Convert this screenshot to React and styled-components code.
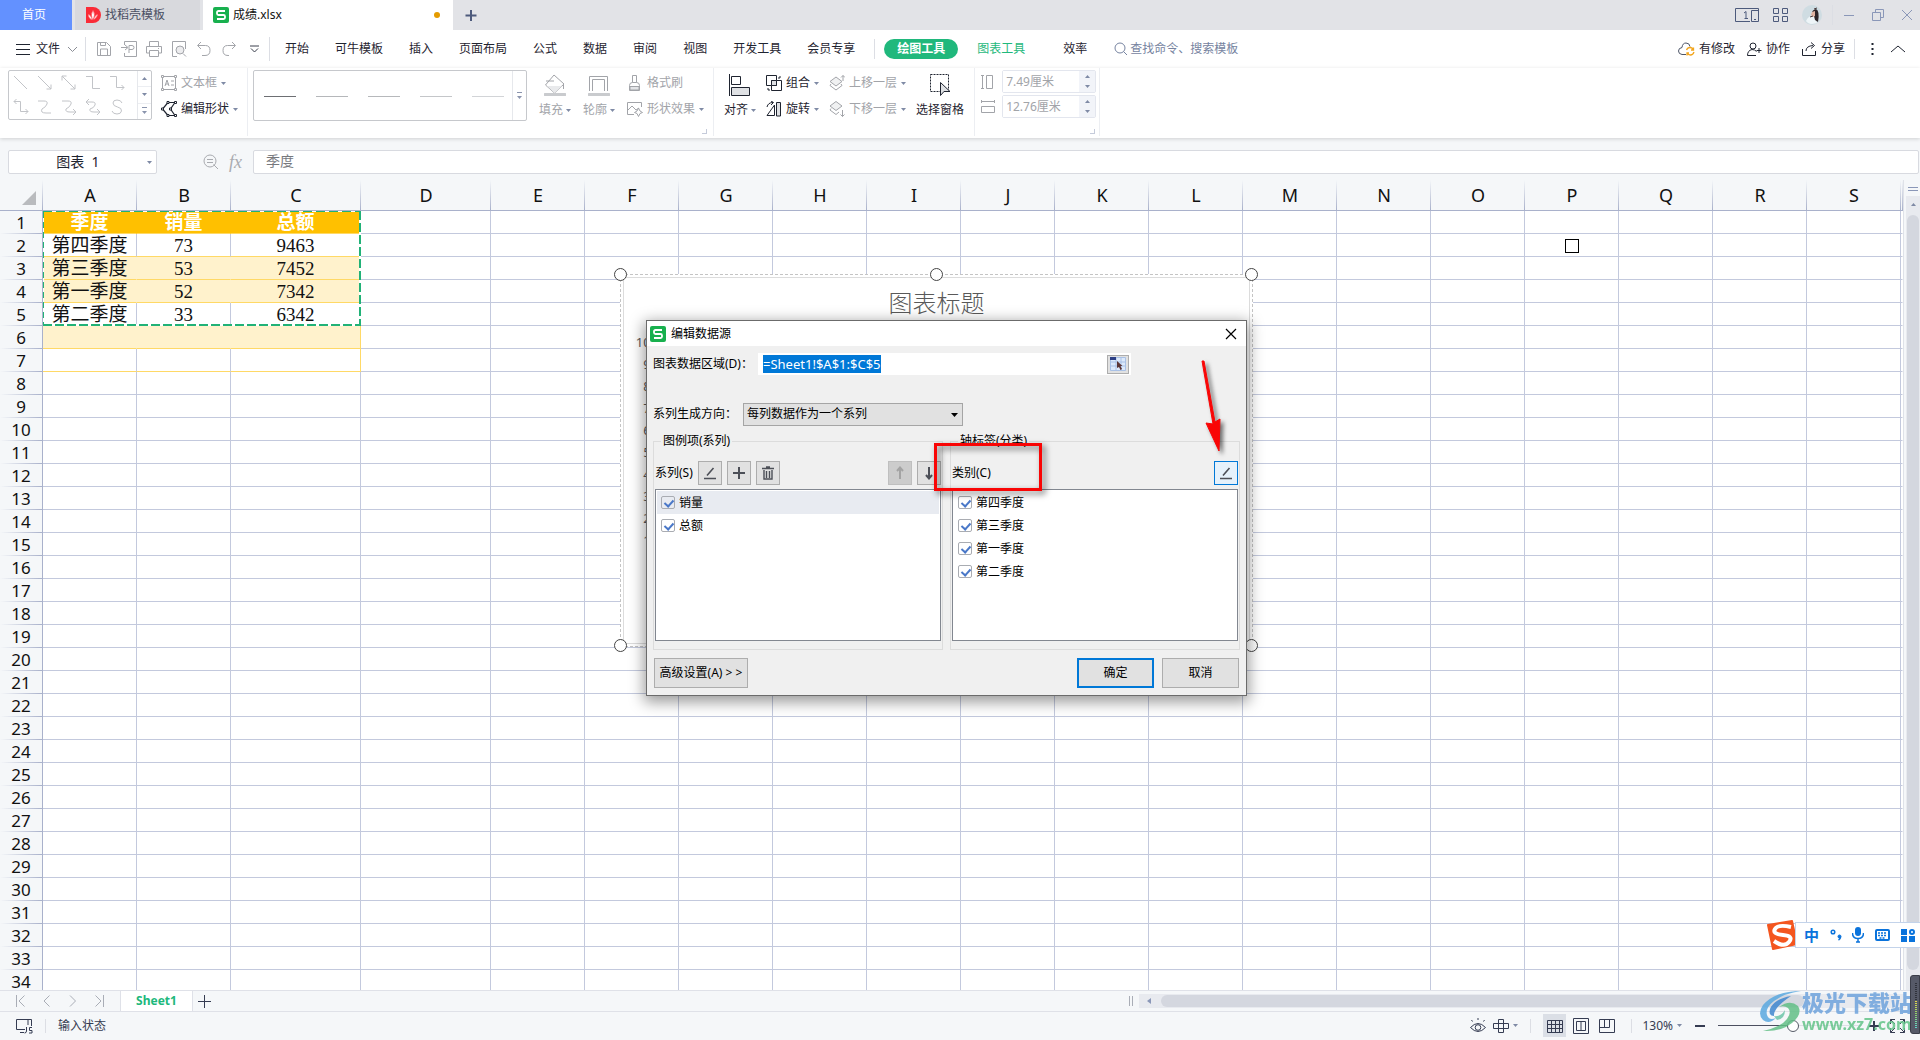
import React, { useEffect, useRef } from 'react';
import styled, { createGlobalStyle, css } from 'styled-components';

const GlobalStyle = createGlobalStyle`
	* { box-sizing: border-box; }
	body {
		margin: 0;
		overflow: hidden;
		background: #f5f7f9;
		color: #1f2430;
		font: 12px/18px 'Noto Sans', 'Noto Sans CJK SC', sans-serif;
	}
	button, input, select { font: inherit; color: inherit; margin: 0; }
	button { padding: 0; border: 0; background: none; white-space: nowrap; }
	svg { display: block; flex: none; }
`;

const Page = styled.div`
	display: flex;
	flex-direction: column;
	height: 100vh;
`;
const Svg = styled.svg`
	fill: none;
	stroke: currentColor;
`;
const Spacer = styled.div`flex: 1;`;
const Divider = styled.div`
	width: 1px;
	height: ${p => p.$h || 24}px;
	margin: 0 ${p => p.$gap || 9}px;
	background: #dcdee4;
	flex: none;
`;

/* ---------- title bar ---------- */
const TitleBar = styled.header`
	display: flex;
	align-items: center;
	height: 30px;
	gap: 3px;
	padding-right: 7px;
	background: #e2e3e7;
	color: #4d5a7c;
`;
const HomeTab = styled.button`
	width: 72px;
	height: 30px;
	padding-right: 4px;
	background: #6391ff;
	color: #fff;
`;
const FileTab = styled.button`
	display: flex;
	align-items: center;
	gap: 4px;
	width: ${p => (p.$active ? 250 : 125)}px;
	height: 30px;
	padding: 0 13px 0 10px;
	background: ${p => (p.$active ? '#fff' : '#d8d9dd')};
	color: ${p => (p.$active ? '#111' : '#4a4f63')};
`;
const Dot = styled.i`
	width: 6px;
	height: 6px;
	border-radius: 3px;
	margin-left: auto;
	background: #e49b00;
`;
const PlainButton = styled.button`
	display: flex;
	align-items: center;
	justify-content: center;
	gap: ${p => p.$gap || 4}px;
	color: ${p => p.$color || 'inherit'};
`;
const AccountTools = styled.div`
	display: flex;
	align-items: center;
	gap: 14px;
`;
const WindowButtons = styled.div`
	display: flex;
	align-items: center;
	gap: 17px;
	color: #8a97b8;
`;

/* ---------- menu ---------- */
const MenuBar = styled.nav`
	display: flex;
	align-items: center;
	height: 38px;
	padding: 0 14px 0 16px;
	background: #fff;
`;
const QuickAccess = styled.div`
	display: flex;
	align-items: center;
	gap: 9px;
	padding-left: 9px;
	color: #a3a5aa;
`;
const MenuTabs = styled.div`
	display: flex;
	align-items: center;
	gap: 26px;
	margin: 0 10px 0 9px;
`;
const ToolTabs = styled.div`
	display: flex;
	align-items: center;
	gap: 19px;
`;
const MenuTab = styled.button`
	color: ${p => (p.$green ? '#1fb97c' : '#1f2430')};
	${p => p.$pill && css`
		width: 74px;
		height: 20px;
		border-radius: 10px;
		background: #20b87c;
		color: #fff;
		font-weight: 700;
	`}
`;
const SearchLabel = styled.label`
	display: flex;
	align-items: center;
	gap: 2px;
	margin-left: 27px;
	color: #7683a0;
	input {
		width: 120px;
		padding: 0;
		border: 0;
		outline: 0;
		background: none;
	}
	input::placeholder { color: #7683a0; opacity: 1; }
`;
const MenuRight = styled.div`
	display: flex;
	align-items: center;
	gap: 12px;
`;

/* ---------- ribbon ---------- */
const Ribbon = styled.section`
	display: flex;
	height: 70px;
	background: #fff;
	box-shadow: 0 1px 4px rgba(0, 0, 0, .16);
	position: relative;
`;
const Group = styled.div`
	display: flex;
	align-items: flex-start;
	gap: ${p => p.$gap || 9}px;
	padding: 2px ${p => p.$right || 9}px 0 ${p => p.$left || 8}px;
	border-right: 1px solid #eceef2;
	height: 68px;
`;
const Corner = styled.i`
	align-self: flex-end;
	width: 5px;
	height: 5px;
	margin: 0 0 2px -14px;
	border: solid #c5cbda;
	border-width: 0 1px 1px 0;
`;
const Gallery = styled.div`
	display: flex;
	height: ${p => p.$h}px;
	border: 1px solid #c6c8cc;
	border-radius: 2px;
	color: #c2c4c8;
`;
const ShapeGrid = styled.div`
	display: grid;
	grid-template-columns: repeat(5, 24px);
	grid-template-rows: repeat(2, 24px);
	place-items: center;
	width: 128px;
`;
const GallerySteps = styled.div`
	display: flex;
	flex-direction: column;
	width: 14px;
	border-left: 1px solid #e6e8ec;
	color: #8a94ad;
	button {
		flex: 1;
		display: grid;
		place-items: center;
	}
	button + button { border-top: 1px solid #eceef2; }
`;
const StrokeList = styled.div`
	display: flex;
	align-items: center;
	gap: 20px;
	width: 258px;
	padding: 2px 0 0 10px;
`;
const StrokeSample = styled.i`
	width: 32px;
	height: 1px;
	background: ${p => p.$color};
`;
const SmallTool = styled.button`
	display: flex;
	align-items: center;
	gap: 4px;
	height: 26px;
	color: ${p => (p.$off ? '#a2a4a9' : '#1f2430')};
`;
const BigTool = styled.button`
	display: flex;
	flex-direction: column;
	align-items: center;
	gap: 4px;
	padding-top: 4px;
	line-height: 20px;
	color: ${p => (p.$off ? '#a2a4a9' : '#1f2430')};
	span { display: flex; align-items: center; gap: 3px; }
`;
const SizeRow = styled.label`
	display: flex;
	align-items: center;
	gap: 7px;
	margin-bottom: 2px;
	color: #a2a4a9;
`;
const SpinBox = styled.span`
	display: flex;
	width: 94px;
	height: 23px;
	border: 1px solid #e3e6ee;
	border-radius: 2px;
	input {
		width: 76px;
		padding: 0 3px;
		border: 0;
		outline: 0;
	}
`;
const SpinArrows = styled.span`
	display: grid;
	place-items: center;
	width: 16px;
	background: #f2f4f9;
`;

/* ---------- formula bar ---------- */
const FormulaBar = styled.div`
	display: flex;
	align-items: center;
	height: 42px;
	padding: 6px 1px 0 8px;
	font-size: 14px;
	color: #a9abb0;
`;
const NameBox = styled.label`
	display: flex;
	align-items: center;
	width: 149px;
	height: 24px;
	margin-right: 46px;
	padding-right: 4px;
	border: 1px solid #d8dae0;
	border-radius: 2px;
	background: #fff;
	input {
		flex: 1;
		min-width: 0;
		border: 0;
		outline: 0;
		text-align: center;
		color: #1f2430;
	}
`;
const Fx = styled.span`
	width: 15px;
	margin: 0 9px 0 10px;
	font: italic 18px/22px 'Liberation Serif', serif;
`;
const FormulaInput = styled.input`
	&& { color: #77797e; }
	flex: 1;
	min-width: 0;
	height: 24px;
	padding: 0 12px 4px;
	border: 1px solid #d8dae0;
	border-radius: 2px;
	background: #fff;
	outline: 0;
`;

/* ---------- sheet ---------- */
const Workspace = styled.main`
	position: relative;
	display: flex;
	flex: 1;
	min-height: 0;
`;
const SheetView = styled.div`
	flex: 1;
	min-width: 0;
	overflow: hidden;
`;
const Sheet = styled.table`
	table-layout: fixed;
	width: 100%;
	border-spacing: 0;
	background: #fff;
	th { padding: 0; height: 23px; line-height: 22px; }
`;
const ColHead = styled.th`
	&& { height: 31px; }
	border-bottom: 1px solid #a9b1cb;
	background: linear-gradient(#f5f7f9, #a9b1cb) right / 1px 100% no-repeat #f5f7f9;
	font-size: 18px;
	font-weight: 400;
	color: #111;
	svg { margin: 5px 0 0 22px; }
`;
const RowHead = styled.th`
	border-right: 1px solid #a9b1cb;
	background: linear-gradient(90deg, #f5f7f9, #a9b1cb) bottom / 100% 1px no-repeat #f5f7f9;
	font-size: 17px;
	font-weight: 400;
	color: #111;
`;
const Cell = styled.td`
	height: 23px;
	padding: 2px 0 0;
	border-right: 1px solid ${p => p.$right || '#c3c9dd'};
	border-bottom: 1px solid ${p => p.$bottom || '#c3c9dd'};
	background: ${p => p.$fill || '#fff'};
	font: ${p => (p.$title ? 700 : 400)} 19px/20px 'Liberation Serif', 'Noto Sans CJK SC', serif;
	text-align: center;
	white-space: nowrap;
	color: ${p => (p.$title ? '#fff' : '#111')};
`;
const Ants = styled(Svg)`
	position: absolute;
	left: 43px;
	top: 31px;
`;
const CellCursor = styled.i`
	position: absolute;
	left: 1565px;
	top: 59px;
	width: 14px;
	height: 14px;
	border: 1px solid #000;
`;
const VScroll = styled.div`
	display: flex;
	flex-direction: column;
	align-items: center;
	width: 17px;
	padding-left: 2px;
	border-left: 1px solid #dfe2e8;
	color: #8a97b8;
`;
const VTrack = styled.div`
	flex: 1;
	display: flex;
	flex-direction: column;
	align-items: center;
	gap: 9px;
	width: 14px;
	padding: 7px 0 20px;
	background: #e8eaef;
	i { flex: 1; width: 12px; border-radius: 6px; background: #d4d7df; }
`;

/* ---------- chart ---------- */
const ChartFrame = styled.div`
	position: absolute;
	left: 620px;
	top: 94px;
	width: 633px;
	height: 373px;
	padding: 2px;
	border: 1px dashed #c4c4c4;
	background: #fff;
`;
const ChartArea = styled.div`
	height: 100%;
	border: 1px solid #dcdcdc;
	padding-top: 7px;
	color: #595959;
`;
const ChartTitle = styled.h2`
	margin: 0 0 12px;
	font: 300 24px/34px 'Noto Sans CJK SC', sans-serif;
	text-align: center;
`;
const AxisLabels = styled.div`
	display: flex;
	flex-direction: column;
	width: 49px;
	font-size: 13px;
	line-height: 22px;
	text-align: right;
`;
const Handle = styled.i`
	position: absolute;
	left: ${p => p.$x};
	top: ${p => p.$y};
	width: 13px;
	height: 13px;
	margin: -7px;
	border: 1px solid #444;
	border-radius: 50%;
	background: #fff;
`;

/* ---------- dialog ---------- */
const Dialog = styled.section`
	position: absolute;
	left: 646px;
	top: 140px;
	width: 601px;
	border: 1px solid #6b6b6b;
	background: #f0f0f0;
	color: #000;
	box-shadow: 0 4px 14px 2px rgba(0, 0, 0, .4);
`;
const DialogTitle = styled.div`
	display: flex;
	align-items: center;
	gap: 5px;
	height: 25px;
	padding: 0 9px 0 3px;
	background: #fff;
	button { margin-left: auto; }
`;
const DialogBody = styled.div`padding: 7px 6px;`;
const Field = styled.div`
	display: flex;
	align-items: center;
	height: 22px;
	margin-bottom: ${p => p.$after}px;
	label { width: ${p => p.$label}px; white-space: nowrap; }
`;
const RangeBox = styled.div`
	display: flex;
	align-items: center;
	width: 373px;
	height: 22px;
	padding: 0 2px 0 5px;
	background: #fff;
	input {
		flex: 1;
		min-width: 0;
		padding: 0;
		border: 0;
		outline: 0;
		font-size: 13px;
	}
	input::selection { background: #0078d7; color: #fff; }
`;
const PickButton = styled.button`
	display: grid;
	place-items: center;
	width: 22px;
	height: 19px;
	border: 1px solid #adadad;
	background: #e1e1e1;
`;
const SelectWrap = styled.div`
	position: relative;
	svg { position: absolute; right: 5px; top: 10px; pointer-events: none; }
	select {
		appearance: none;
		width: 220px;
		height: 23px;
		padding: 0 3px;
		border: 1px solid #a5a5a5;
		border-radius: 0;
		background: #e1e1e1;
	}
`;
const Panels = styled.div`
	display: grid;
	grid-template-columns: 1fr 1fr;
	gap: 7px;
`;
const Panel = styled.fieldset`
	min-width: 0;
	margin: 0;
	padding: 11px 1px 8px;
	border: 1px solid #dcdcdc;
	legend { margin-left: 6px; padding: 0 2px; line-height: 18px; }
`;
const PanelBar = styled.div`
	display: flex;
	align-items: center;
	gap: 5px;
	height: 24px;
	margin-bottom: 4px;
	button:first-of-type { margin-left: ${p => (p.$push ? 'auto' : 0)}; }
`;
const SquareButton = styled.button`
	display: grid;
	place-items: center;
	width: 24px;
	height: 24px;
	border: 1px solid ${p => (p.$hot ? '#0078d7' : p.$off ? '#bfbfbf' : '#adadad')};
	background: ${p => (p.$hot ? '#e5f1fb' : p.$off ? '#cccccc' : '#e1e1e1')};
	color: ${p => (p.$off ? '#a3a3a3' : '#4c4f57')};
`;
const CheckList = styled.ul`
	list-style: none;
	height: 152px;
	margin: 0;
	padding: 1px;
	border: 1px solid #828790;
	background: #fff;
`;
const CheckItem = styled.li`
	height: 23px;
	background: ${p => (p.$active ? '#e8ebf1' : 'transparent')};
	label {
		display: flex;
		align-items: center;
		gap: 4px;
		height: 23px;
		padding-left: 4px;
	}
	input {
		appearance: none;
		position: relative;
		width: 14px;
		height: 13px;
		border: 1px solid #a9acb2;
		border-radius: 2px;
	}
	input:checked::after {
		content: '';
		position: absolute;
		left: 4px;
		top: 1px;
		width: 4px;
		height: 7px;
		border: solid #4a78c8;
		border-width: 0 2px 2px 0;
		transform: rotate(42deg);
	}
`;
const DialogFooter = styled.div`
	display: flex;
	gap: 8px;
	margin: 8px 1px 0;
`;
const DialogButton = styled.button`
	width: ${p => p.$w || 77}px;
	height: 30px;
	border: ${p => (p.$primary ? '2px solid #0078d7' : '1px solid #adadad')};
	background: #e1e1e1;
`;
const RedFrame = styled.i`
	position: absolute;
	left: 287px;
	top: 122px;
	width: 108px;
	height: 48px;
	border: 3px solid #f90505;
	filter: drop-shadow(3px 3px 3px rgba(0, 0, 0, .6));
`;
const RedArrow = styled.svg`
	position: absolute;
	left: 547px;
	top: 34px;
	filter: drop-shadow(3px 3px 2px rgba(0, 0, 0, .55));
`;

/* ---------- bottom bars ---------- */
const TabStrip = styled.div`
	display: flex;
	align-items: center;
	height: 22px;
	padding: 0 14px 0 16px;
	border: solid #dfe1e8;
	border-width: 1px 0;
	color: #a9adb6;
`;
const TabNav = styled.div`
	display: flex;
	gap: 18px;
	width: 104px;
`;
const SheetTab = styled.button`
	width: 73px;
	height: 21px;
	border: solid #dfe1e8;
	border-width: 0 1px 1px;
	background: #fff;
	font-weight: 700;
	color: #20b87c;
`;
const HScroll = styled.div`
	display: flex;
	align-items: center;
	gap: 10px;
	width: 767px;
	height: 14px;
	margin-left: 6px;
	padding: 0 102px 0 8px;
	background: #e8eaef;
	color: #8a97b8;
	i { flex: 1; height: 12px; border-radius: 6px; background: #d4d7df; }
`;
const StatusBar = styled.footer`
	display: flex;
	align-items: center;
	height: 28px;
	padding: 0 15px 1px 16px;
	color: #353c52;
`;
const ViewButton = styled.button`
	display: grid;
	place-items: center;
	width: 23px;
	height: 23px;
	margin-right: 3px;
	background: ${p => (p.$on ? '#dbdfe6' : 'none')};
`;
const Zoom = styled.input`
	&& { margin: 0 6px 0 12px; }
	appearance: none;
	width: 144px;
	height: 12px;
	background: linear-gradient(90deg, #4b4f60 52%, #dcdfe6 52%) center / 100% 1px no-repeat;
	&::-webkit-slider-thumb {
		appearance: none;
		width: 12px;
		height: 12px;
		border: 1px solid #555a66;
		border-radius: 50%;
		background: #fff;
	}
`;

/* ---------- floating things ---------- */
const ImeBar = styled.div`
	position: fixed;
	right: 0;
	bottom: 90px;
	display: flex;
	align-items: center;
	gap: 9px;
	width: 154px;
	height: 30px;
	color: #0a73dc;
	font-size: 15px;
	font-weight: 700;
`;
const ImeTools = styled.div`
	display: flex;
	align-items: center;
	justify-content: space-between;
	flex: 1;
	height: 26px;
	margin-left: -12px;
	padding: 0 5px 0 8px;
	border: 1px solid #c3d3ea;
	border-right: 0;
	background: #fff;
`;
const Meter = styled.div`
	position: fixed;
	right: 0;
	bottom: 6px;
	width: 10px;
	height: 59px;
	padding: 7px 2px 5px 4px;
	border-radius: 3px 0 0 3px;
	border: 1px solid #3b3e49;
	background: #565a68;
	i {
		display: block;
		height: 100%;
		background:
			repeating-linear-gradient(transparent 0 1px, #565a68 1px 2px),
			linear-gradient(#2f323b 40%, #e5d84a 40%, #8ed36a 70%, #5fd8cf);
	}
`;
const Watermark = styled.div`
	position: fixed;
	right: 8px;
	bottom: 6px;
	display: flex;
	opacity: .85;
	font-weight: 700;
	pointer-events: none;
	b { display: block; font-size: 22px; line-height: 24px; color: #6ea3dc; }
	span { display: block; font-size: 16px; line-height: 20px; color: #63c389; }
`;

const Caret = ({ up }) => (
	<Svg width="5" height="3" viewBox="0 0 5 3">
		<path d={up ? 'M0 3h5L2.5 0z' : 'M0 0h5L2.5 3z'} fill="#7f8aa5" stroke="none" />
	</Svg>
);

const DoubleCaret = () => (
	<Svg width="7" height="8"><path d="M1 .5h5" /><path d="M1 4h5L3.5 7z" fill="currentColor" stroke="none" /></Svg>
);

const Icon = ({ d, w = 16, h = 16, sw = 1, children }) => (
	<Svg width={w} height={h} viewBox={`0 0 ${w} ${h}`} strokeWidth={sw}>
		<path d={d} />
		{children}
	</Svg>
);

const Logo = () => (
	<Svg width="16" height="16">
		<rect width="16" height="16" rx="2" fill="#18b04e" stroke="none" />
		<path d="M12 4H5.5Q4 4 4 5.5v1Q4 8 5.5 8h5Q12 8 12 9.5v1q0 1.5-1.5 1.5H4" stroke="#fff" strokeWidth="1.8" />
	</Svg>
);

const EditPen = () => <Icon w={14} h={14} d="M1 12.5h12M4 9.5L10.5 2" sw={1.6} />;

const quickIcons = [
	'M1.5 1.5h9l4 4v9h-13zM4.5 14V8h7v6M4.5 1.5v3h5v-3',
	'M3.5 4V.5h12v15h-12V12M0 6.5h6M4 4l3 2.5L4 9M8 12V4.5h3q2 0 2 2t-2 2H8',
	'M3.5 5V.5h9V5M3.5 12h-3V5.5h15V12h-3M3.5 9.5h9v6h-9zM12 7.5h1',
	'M6 15.5H1.5V.5h13V8M12 12.5l3 3',
	'M5 1L1.5 4.5 5 8M2 4.5h7.5q4.5 0 4.5 5t-5 5H6',
	'M11 1l3.5 3.5L11 8M14 4.5H6.5Q2 4.5 2 9.5t5 5h1',
];

const shapeIcons = [
	'M1 1l13 13',
	'M1 1l13 13M14 9.5V14H9.5',
	'M1 1l13 13M14 9.5V14H9.5M1 5.5V1h4.5',
	'M1 1.5h6.5v12H15',
	'M1 1.5h6.5v11H15M12.5 10l2.5 2.5-2.5 2.5',
	'M1 2.5h6.5v10H15M12.5 10l2.5 2.5-2.5 2.5M3.5 0L1 2.5 3.5 5',
	'M1 2h6q4 0 3 3t-5 5q-2 4 4 4h5',
	'M1 2h6q4 0 3 3t-5 5q-1 3 4 3h6M12 10l3 3-3 3',
	'M1 3h6q4 0 3 3t-5 4q-1 3 4 3h6M12 10l3 3-3 3M4 0L1 3l3 3',
	'M13 4Q12 1 8 1 4 1 4 4t4.5 4 4 4Q12 15 8 15 4 15 3 12',
];

const strokeColors = ['#6d6f73', '#b5b7ba', '#b6b8bb', '#c4c6c9', '#d2d4d7'];
const menuTabs = ['开始', '可牛模板', '插入', '页面布局', '公式', '数据', '审阅', '视图', '开发工具', '会员专享'];
const columns = 'ABCDEFGHIJKLMNOPQRS'.split('');
const wideColumns = { C: 130, D: 130 };
const rowCount = 34;
const cells = [
	['季度', '销量', '总额'],
	['第四季度', '73', '9463'],
	['第三季度', '53', '7452'],
	['第一季度', '52', '7342'],
	['第二季度', '33', '6342'],
];
const quarters = ['第四季度', '第三季度', '第一季度', '第二季度'];
const axisValues = [10000, 9000, 8000, 7000, 6000, 5000, 4000, 3000, 2000, 1000];

function TopBar () {
	return (
		<TitleBar>
			<HomeTab>首页</HomeTab>
			<FileTab>
				<Svg width="16" height="16">
					<path d="M1 0h7a8 8 0 0 1 0 16H1z" fill="#fa2c37" stroke="none" />
					<path d="M7.5 13Q5 8 8 3q3 5 0 10M7 13Q3 11 3 7q3 1 4.5 6M8 13q4-2 5-6-3 1-5 6" fill="#fff" stroke="#fa2c37" strokeWidth=".5" />
				</Svg>
				找稻壳模板
			</FileTab>
			<FileTab $active>
				<Logo />
				成绩.xlsx
				<Dot />
			</FileTab>
			<PlainButton aria-label="新建"><Icon w={30} h={14} d="M15 2v11M9.5 7.5h11" sw={2} /></PlainButton>
			<Spacer />
			<AccountTools>
				<Svg width="24" height="14">
					<path d="M15 13.5H.5V.5h23v13h-7v-11h7M19 11.5h2" />
					<path d="M9 5l2-1.5V11M9.5 10.5h3.5" />
				</Svg>
				<Icon w={15} h={14} d="M.5.5h5v5h-5zM9.5.5h5v5h-5zM.5 8.5h5v5h-5zM9.5 8.5h5v5h-5z" />
				<Svg width="20" height="20">
					<circle cx="10" cy="10" r="10" fill="#cfdce2" stroke="none" />
					<path d="M10 19q-4 0-6-3 2-5 8-6l3 8z" fill="#eef5f8" stroke="none" />
					<path d="M10 8q0-3 4-4 4 2 2 13l-3-2-1-4z" fill="#2c2428" stroke="none" />
					<path d="M10 7l3-1v5l-2 1-2-2z" fill="#e0b3a2" stroke="none" />
					<path d="M8 12l3-1M12 4l3-1" stroke="#4a3b3c" />
				</Svg>
			</AccountTools>
			<Divider $h={20} $gap={7} />
			<WindowButtons>
				<Icon w={12} h={12} d="M1 6.5h10" />
				<Icon w={12} h={12} d="M.5 3.5h8v8h-8zM3.5 3.5v-3h8v8h-3" />
				<Icon w={12} h={12} d="M1 1l10 10M11 1L1 11" />
			</WindowButtons>
		</TitleBar>
	);
}

function Menu () {
	return (
		<MenuBar>
			<PlainButton $gap={6}>
				<Icon w={14} h={12} d="M0 1.5h14M0 6.5h14M0 11.5h14" />
				文件
			</PlainButton>
			<PlainButton $color="#8a8d95"><Icon w={24} h={6} d="M8 1l4.5 4.5L17 1" /></PlainButton>
			<Divider $gap={1} />
			<QuickAccess>
				{quickIcons.map((d, i) => (
					<PlainButton key={d}>
						<Icon d={d}>{i === 3 && <circle cx="9" cy="9" r="4" fill="#ececee" />}</Icon>
					</PlainButton>
				))}
				<PlainButton $color="#3a3f4c"><Icon w={17} h={8} d="M4 1h9M5 3.5L8.5 7 12 3.5" /></PlainButton>
			</QuickAccess>
			<Divider $gap={6} />
			<MenuTabs>
				{menuTabs.map(name => <MenuTab key={name}>{name}</MenuTab>)}
			</MenuTabs>
			<Divider $h={20} $gap={9} />
			<ToolTabs>
				<MenuTab $pill>绘图工具</MenuTab>
				<MenuTab $green>图表工具</MenuTab>
				<Spacer />
				<MenuTab>效率</MenuTab>
			</ToolTabs>
			<SearchLabel>
				<Icon w={14} h={14} d="M9.5 9.5L13 13"><circle cx="6" cy="6" r="5" /></Icon>
				<input placeholder="查找命令、搜索模板" />
			</SearchLabel>
			<Spacer />
			<MenuRight>
				<PlainButton>
					<Svg width="17" height="14">
						<path d="M8 12.5H4Q.5 12 .5 9T4 5.5Q4.5 1 8 1t4 3.5" stroke="#4d5568" />
						<path d="M8.5 8q1-2.5 3.5-2.5T15.5 8M15.5 5.5V8H13M16 10q-1 3-3.5 3T9 11M9 13.5V11h2" stroke="#f2a51d" strokeWidth="1.3" />
					</Svg>
					有修改
				</PlainButton>
				<PlainButton>
					<Icon w={15} h={14} d="M9 13.5H.5q0-5 4.5-6 3 0 4.5 2M12 6v5M9.5 8.5h5"><circle cx="6" cy="4" r="3" /></Icon>
					协作
				</PlainButton>
				<PlainButton>
					<Icon w={15} h={14} d="M.5 7v6.5h13V9M4 9q0-5 7-5.5M9 .5l3.5 3L9 6.5" />
					分享
				</PlainButton>
			</MenuRight>
			<Divider $h={20} $gap={9} />
			<Icon w={18} h={14} d="M8.5 1v2M8.5 6v2M8.5 11v2" sw={2} />
			<Icon w={24} h={8} d="M9 7l7-6 7 6" />
		</MenuBar>
	);
}

function Tools () {
	return (
		<Ribbon>
			<Group>
				<Gallery $h={50}>
					<ShapeGrid>{shapeIcons.map(d => <Icon key={d} d={d} />)}</ShapeGrid>
					<GallerySteps>
						<button aria-label="上"><Caret up /></button>
						<button aria-label="下"><Caret /></button>
						<button aria-label="更多"><DoubleCaret /></button>
					</GallerySteps>
				</Gallery>
				<div>
					<SmallTool $off>
						<Icon d="M2.5 1.5h11M2.5 14.5h11M1.5 2.5v11M14.5 2.5v11M4 11l2-6 2 6M5 9h2.5M10 6h3M10 10h3">
							<path d="M.5.5h2v2h-2zM13.5.5h2v2h-2zM.5 13.5h2v2h-2zM13.5 13.5h2v2h-2z" fill="#fff" />
						</Icon>
						文本框 <Caret />
					</SmallTool>
					<SmallTool>
						<Icon d="M7 1.5L1.5 8 7 14.5M14 1.5L9.5 8l4.5 6.5M7 1.5h7M7 14.5h7" sw={1.2}>
							<path d="M6 .5h2v2H6zM13.5.5h2v2h-2zM6 13.5h2v2H6zM13.5 13.5h2v2h-2zM.5 7h2v2h-2zM8.5 7h2v2h-2z" fill="#fff" strokeWidth="1" />
						</Icon>
						编辑形状 <Caret />
					</SmallTool>
				</div>
			</Group>
			<Group $left={5} $right={6} $gap={12}>
				<Gallery $h={51}>
					<StrokeList>{strokeColors.map(c => <StrokeSample key={c} $color={c} />)}</StrokeList>
					<GallerySteps><button aria-label="更多"><DoubleCaret /></button></GallerySteps>
				</Gallery>
				<BigTool $off>
					<Icon w={22} h={22} d="M10 1L1.5 11l9 8 9.5-9zM2 7h8M19.5 10v5">
						<path d="M3 12h15l-7.5 7z" fill="#e9eaec" stroke="none" />
						<path d="M1 20.5h20" stroke="#c9cbce" strokeWidth="3" strokeLinecap="round" />
					</Icon>
					<span>填充 <Caret /></span>
				</BigTool>
				<BigTool $off>
					<Icon w={22} h={22} d="M1.5 17V2.5h18V17M4.5 17V5.5h12V17">
						<path d="M1 20.5h20" stroke="#c9cbce" strokeWidth="3" strokeLinecap="round" />
					</Icon>
					<span>轮廓 <Caret /></span>
				</BigTool>
				<div>
					<SmallTool $off>
						<Icon d="M5.5 7.5v-7h4v7M2.5 15.5v-5q0-3 3-3h4q3 0 3 3v5z"><path d="M3 11.5h9V15H3z" fill="#e4e5e8" /></Icon>
						格式刷
					</SmallTool>
					<SmallTool $off>
						<Icon d="M7 13.5H.5v-12h14V6M1 9l4-4 4 4 3-2M11.5 7l1.5 3 2.5 1.5-2.5 1-1.5 3-1.5-3-2.5-1L10 10z" />
						形状效果 <Caret />
					</SmallTool>
				</div>
				<Corner />
			</Group>
			<Group $left={10} $right={10} $gap={10}>
				<BigTool>
					<Icon w={24} h={22} d="M1.5 0v22M3.5 2.5h9v8h-9z"><path d="M3.5 13.5h18v8h-18z" fill="#dfe1e4" /></Icon>
					<span>对齐 <Caret /></span>
				</BigTool>
				<div>
					<SmallTool>
						<Icon d="M.5.5h10v10H.5zM5.5 5.5h10v10h-10zM14 1v2h-2M2 13v2h2"><path d="M5.5 5.5h5v5h-5z" fill="#dfe1e4" /></Icon>
						组合 <Caret />
					</SmallTool>
					<SmallTool>
						<Icon d="M8.5 4L1 14.5h7.5zM1 6q1-4.5 6-4.5M5 0l2.5 1.5L5 4"><path d="M10.5 1.5h4V15h-4z" fill="#dfe1e4" /></Icon>
						旋转 <Caret />
					</SmallTool>
				</div>
				<div>
					<SmallTool $off>
						<Icon d="M2 9l-1 1.5L7 15l6-4.5L12 9M14 6V.5M12 2.5l2-2 2 2"><path d="M7 2L1 6.5 7 11l6-4.5z" fill="#f0f1f2" /></Icon>
						上移一层 <Caret />
					</SmallTool>
					<SmallTool $off>
						<Icon d="M2 7.5L1 9l6 4.5L10 11M13.5 9v6.5M11.5 13.5l2 2 2-2"><path d="M7 .5L1 5l6 4.5L13 5z" fill="#f0f1f2" /></Icon>
						下移一层 <Caret />
					</SmallTool>
				</div>
				<BigTool>
					<Svg width="24" height="22">
						<path d="M2.5.5h18v17h-18z" strokeDasharray="2 1" />
						<path d="M12.5 8.5v13l3.5-4h6z" fill="#dfe1e4" />
					</Svg>
					<span>选择窗格</span>
				</BigTool>
			</Group>
			<Group $left={6} $right={4} $gap={8}>
				<div>
					<SizeRow>
						<Icon w={14} h={16} d="M0 1.5h3M0 14.5h3M1.5 2v12M5.5 1.5h6v13h-6z" />
						<SpinBox><input defaultValue="7.49厘米" /><SpinArrows><Caret up /><Caret /></SpinArrows></SpinBox>
					</SizeRow>
					<SizeRow>
						<Icon w={14} h={16} d="M.5 1v3M13.5 1v3M1 2.5h12M.5 7.5h13v6H.5z" />
						<SpinBox><input defaultValue="12.76厘米" /><SpinArrows><Caret up /><Caret /></SpinArrows></SpinBox>
					</SizeRow>
				</div>
				<Corner />
			</Group>
		</Ribbon>
	);
}

function Grid () {
	const rows = Array.from({ length: rowCount }, (_, r) => r);

	// table style: gold header, banded rows 3, 4 and 6, outline down to row 7
	const cellStyle = (r, c) => {
		if (c > 2 || r > 6) return {};
		const fill = r === 0 ? '#ffc000' : [2, 3, 5].includes(r) ? '#fff2cc' : '#fff';
		const right = c === 2 && r > 4 ? '#ffd966' : fill !== '#fff' ? fill : undefined;
		return { $fill: fill, $right: right, $bottom: '#ffd966', $title: r === 0 };
	};

	return (
		<Sheet>
			<colgroup>
				<col width="43" />
				{columns.map(c => <col key={c} width={wideColumns[c] || 94} />)}
				<col />
			</colgroup>
			<thead>
				<tr>
					<ColHead><Svg width="14" height="14"><path d="M14 0v14H0z" fill="#b9bbbe" stroke="none" /></Svg></ColHead>
					{columns.map(c => <ColHead key={c} scope="col">{c}</ColHead>)}
					<ColHead />
				</tr>
			</thead>
			<tbody>
				{rows.map(r => (
					<tr key={r}>
						<RowHead scope="row">{r + 1}</RowHead>
						{columns.map((name, c) => (
							<Cell key={name} {...cellStyle(r, c)}>{cells[r] && cells[r][c]}</Cell>
						))}
						<Cell $right="#fff" />
					</tr>
				))}
			</tbody>
		</Sheet>
	);
}

function Chart () {
	return (
		<ChartFrame>
			<ChartArea>
				<ChartTitle>图表标题</ChartTitle>
				<AxisLabels>{axisValues.map(v => <span key={v}>{v}</span>)}</AxisLabels>
			</ChartArea>
			<Handle $x="0" $y="0" />
			<Handle $x="50%" $y="0" />
			<Handle $x="100%" $y="0" />
			<Handle $x="0" $y="100%" />
			<Handle $x="100%" $y="100%" />
		</ChartFrame>
	);
}

function CheckRow ({ name, active }) {
	return (
		<CheckItem $active={active}>
			<label><input type="checkbox" defaultChecked />{name}</label>
		</CheckItem>
	);
}

function DataSourceDialog () {
	const rangeRef = useRef(null);

	useEffect(() => {
		rangeRef.current.focus();
		rangeRef.current.select();
	}, []);

	return (
		<Dialog role="dialog" aria-label="编辑数据源">
			<DialogTitle>
				<Logo />
				编辑数据源
				<button aria-label="关闭"><Icon w={12} h={12} d="M1 1l10 10M11 1L1 11" sw={1.2} /></button>
			</DialogTitle>
			<DialogBody>
				<Field $after={28} $label={105}>
					<label htmlFor="range">图表数据区域(D)：</label>
					<RangeBox>
						<input id="range" ref={rangeRef} defaultValue="=Sheet1!$A$1:$C$5" />
						<PickButton aria-label="选择区域">
							<Svg width="16" height="14">
								<path d="M.5.5h15v13H.5z" fill="#dce9fb" stroke="#a9c1e6" />
								<path d="M1 5h14M1 9h14M6 1v12M11 1v12" stroke="#a9c1e6" />
								<path d="M0 0h6v3H0z" fill="#2c3f86" stroke="none" />
								<path d="M7 4v7l2-1 1.5 3 1.5-1-1.5-3h2z" fill="#5a3434" stroke="none" />
							</Svg>
						</PickButton>
					</RangeBox>
				</Field>
				<Field $after={7} $label={90}>
					<label htmlFor="direction">系列生成方向：</label>
					<SelectWrap>
						<select id="direction" defaultValue="col">
							<option value="col">每列数据作为一个系列</option>
							<option value="row">每行数据作为一个系列</option>
						</select>
						<Svg width="7" height="4"><path d="M0 0h7L3.5 4z" fill="#000" stroke="none" /></Svg>
					</SelectWrap>
				</Field>
				<Panels>
					<Panel>
						<legend>图例项(系列)</legend>
						<PanelBar>
							系列(S)
							<SquareButton aria-label="编辑系列"><EditPen /></SquareButton>
							<SquareButton aria-label="添加"><Icon w={14} h={14} d="M7 1v12M1 7h12" sw={2} /></SquareButton>
							<SquareButton aria-label="删除"><Icon w={12} h={14} d="M0 2.5h12M4 1h4M2 4v9h8V4M4.5 5v7M7.5 5v7" sw={1.4} /></SquareButton>
							<Spacer />
							<SquareButton $off aria-label="上移"><Icon w={10} h={14} d="M5 13V2M2 5l3-3.5L8 5" sw={2} /></SquareButton>
							<SquareButton aria-label="下移"><Icon w={10} h={14} d="M5 1v11M2 9l3 3.5L8 9" sw={2} /></SquareButton>
						</PanelBar>
						<CheckList>
							<CheckRow name="销量" active />
							<CheckRow name="总额" />
						</CheckList>
					</Panel>
					<Panel>
						<legend>轴标签(分类)</legend>
						<PanelBar $push>
							类别(C)
							<SquareButton $hot aria-label="编辑类别"><EditPen /></SquareButton>
						</PanelBar>
						<CheckList>
							{quarters.map(q => <CheckRow key={q} name={q} />)}
						</CheckList>
					</Panel>
				</Panels>
				<DialogFooter>
					<DialogButton $w={94}>高级设置(A) &gt; &gt;</DialogButton>
					<Spacer />
					<DialogButton $primary>确定</DialogButton>
					<DialogButton>取消</DialogButton>
				</DialogFooter>
			</DialogBody>
			<RedFrame />
			<RedArrow width="36" height="100">
				<path d="M8 6L19 69l-7-1 13 28 1-32-5 3L10 6z" fill="#f90505" stroke="#f90505" strokeLinejoin="round" />
			</RedArrow>
		</Dialog>
	);
}

function Bottom () {
	return (
		<>
			<TabStrip>
				<TabNav>
					<Icon w={9} h={12} d="M.5 0v12M8.5.5L3 6l5.5 5.5" />
					<Icon w={8} h={12} d="M6.5.5L1 6l5.5 5.5" />
					<Icon w={8} h={12} d="M1 .5L6.5 6 1 11.5" />
					<Icon w={9} h={12} d="M8.5 0v12M.5.5L6 6 .5 11.5" />
				</TabNav>
				<SheetTab>Sheet1</SheetTab>
				<PlainButton aria-label="新建工作表" $color="#353c52"><Icon w={24} h={13} d="M11.5 0v13M5 6.5h13" /></PlainButton>
				<Spacer />
				<Icon w={4} h={10} d="M.5 0v10M3.5 0v10" />
				<HScroll>
					<Svg width="4" height="6"><path d="M4 0v6L0 3z" fill="currentColor" stroke="none" /></Svg>
					<i />
				</HScroll>
			</TabStrip>
			<StatusBar>
				<Icon w={17} h={16} d="M9 11.5H.5v-10H15M4 14.5h4M12 7V1.5h3.5V8M10.5 9v4q0 2-2 2M16 9.5h-2.5v3H16v2.5h-3" />
				<Divider $h={14} $gap={12} />
				<Spacer>输入状态</Spacer>
				<Icon w={23} d="M.5 9.5Q8 1.5 15.5 9.5 8 17.5.5 9.5M8 0v2M1.5 2l1 1.5M14.5 2l-1 1.5"><circle cx="8" cy="9.5" r="2.8" /></Icon>
				<PlainButton><Icon d="M5.5 1.5h5v13h-5zM.5 5.5h15v5H.5z" /><Caret /></PlainButton>
				<Divider $h={14} $gap={12} />
				<ViewButton $on aria-label="普通视图"><Icon d="M.5 2.5h15v12H.5zM.5 6.5h15M.5 10.5h15M4.5 2.5v12M8.5 2.5v12M12.5 2.5v12" /></ViewButton>
				<ViewButton aria-label="分页预览"><Icon d="M.5.5h15v15H.5zM3.5 3.5h9v9h-9zM8 3.5v9" /></ViewButton>
				<ViewButton aria-label="页面布局"><Icon d="M.5 1.5h15v13H.5zM5.5 1.5v8M10.5 1.5v8M.5 9.5h10" /></ViewButton>
				<Divider $h={14} $gap={10} />
				<PlainButton>130% <Caret /></PlainButton>
				<Icon w={24} h={12} d="M13 6h10" sw={2} />
				<Zoom type="range" defaultValue="52" aria-label="缩放" />
				<Icon w={22} h={12} d="M6 1v10M1 6h10" sw={2} />
				<Icon w={15} h={14} d="M5 .5H.5V5M.5.5L5 5M10 .5h4.5V5M14.5.5L10 5M5 13.5H.5V9M.5 13.5L5 9M10 13.5h4.5V9M14.5 13.5L10 9" />
			</StatusBar>
		</>
	);
}

function Floating () {
	return (
		<>
			<ImeBar>
				<Svg width="32" height="30">
					<path d="M2 5L26 1l5 23-24 5z" fill="#f4561f" stroke="#f4561f" strokeWidth="2" strokeLinejoin="round" />
					<path d="M25 7Q12 4 9 9t8 6 6 7-15-1" stroke="#fff" strokeWidth="4" />
				</Svg>
				<ImeTools>
					<span>中</span>
					<Svg width="12" height="12"><circle cx="3" cy="3" r="1.8" strokeWidth="1.5" /><circle cx="9.5" cy="7.5" r="1.5" fill="currentColor" /><path d="M10.5 8q0 2-2 3" strokeWidth="1.5" /></Svg>
					<Svg width="12" height="16"><rect x="3" y="0" width="6" height="9" rx="3" fill="currentColor" stroke="none" /><path d="M.5 6q0 5.5 5.5 5.5T11.5 6M6 12v3M4 15h4" strokeWidth="1.5" /></Svg>
					<Svg width="15" height="12"><rect x="1" y="1" width="13" height="10" rx="1" strokeWidth="2" /><path d="M3 4h9M3 6.5h9M4.5 9h6" strokeDasharray="2 1" strokeWidth="1.5" /></Svg>
					<Svg width="14" height="13"><path d="M0 0h6v6H0zM0 7h6v6H0zM8 7h6v6H8z" fill="currentColor" stroke="none" /><circle cx="11" cy="3" r="2" strokeWidth="2" /></Svg>
				</ImeTools>
			</ImeBar>
			<Watermark>
				<Svg width="43" height="44" viewBox="0 0 43 44">
					<path d="M42 1Q26 3 15 11 6 18 8 25q2 6 9 3-7 7-13 2-6-6 0-15Q16 1 42 1z" fill="#5aa9e0" stroke="none" />
					<path d="M32 6Q15 9 11 19q-2 7 4 7-1-8 17-20z" fill="#3f86cf" stroke="none" />
					<path d="M20 17q11-8 19-1 5 8-6 17Q22 42 4 41q18-4 24-12 5-7 1-11-4-3-9-1z" fill="#62bf86" stroke="none" />
					<path d="M15 26q7 1 11-6 0 9-8 10z" fill="#6cc5a8" stroke="none" />
				</Svg>
				<div>
					<b>极光下载站</b>
					<span>www.xz7.com</span>
				</div>
			</Watermark>
			<Meter><i /></Meter>
		</>
	);
}

function App () {
	return (
		<Page>
			<GlobalStyle />
			<TopBar />
			<Menu />
			<Tools />
			<FormulaBar>
				<NameBox><input aria-label="名称框" defaultValue="图表  1" /><Caret /></NameBox>
				<Icon d="M10.5 10.5L15 15M4 5.5h6M4 8.5h6"><circle cx="7" cy="7" r="6" /></Icon>
				<Fx>fx</Fx>
				<FormulaInput aria-label="编辑栏" defaultValue="季度" />
			</FormulaBar>
			<Workspace>
				<SheetView><Grid /></SheetView>
				<VScroll>
					<Icon w={10} h={16} d="M0 7.5h10M0 10.5h10" />
					<VTrack><Caret up /><i /></VTrack>
				</VScroll>
				<Ants width="319" height="115">
					<path d="M.5 1v113M0 .5h318" stroke="#fff" />
					<path d="M.5 1v113" stroke="#21b277" strokeDasharray="6 4" />
					<path d="M0 .5h318" stroke="#21b277" strokeDasharray="9 4" />
					<path d="M317 0v114M0 114h318" stroke="#fff" strokeWidth="2" />
					<path d="M317 0v114M0 114h318" stroke="#21b277" strokeWidth="2" strokeDasharray="9 3" />
				</Ants>
				<CellCursor />
				<Chart />
				<DataSourceDialog />
			</Workspace>
			<Bottom />
			<Floating />
		</Page>
	);
}

export default App;
